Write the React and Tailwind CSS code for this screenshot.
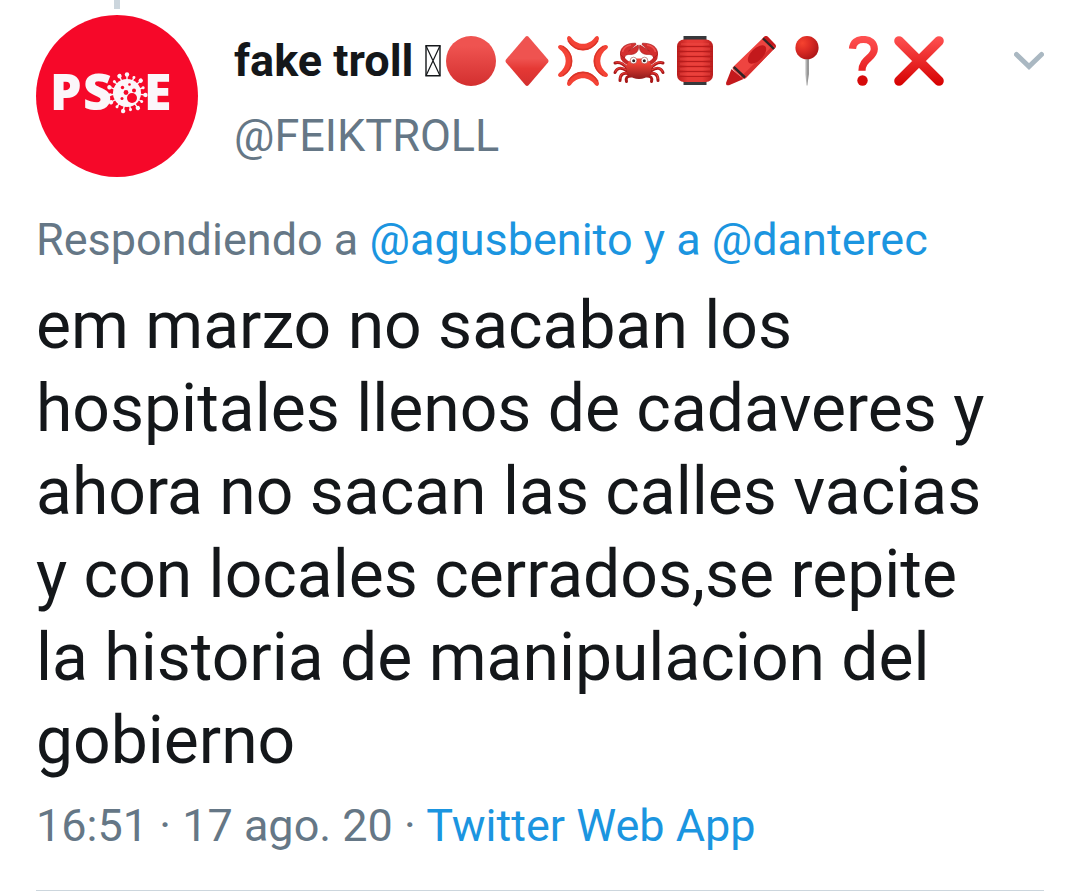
import { useId } from 'react';

const linkCls = 'text-[#1b95e0]';

const VIRUS_SPIKES = [0, 24, 48, 72, 96, 120, 144, 168, 192, 216, 240, 264, 288, 312, 336];

function Avatar() {
  return (
    <svg className="block w-full" viewBox="0 0 162 162" role="img" aria-label="PSOE">
      <circle cx="81" cy="81" r="81" fill="#f60829" />
      <g fill="#fbf6fa" fontFamily="'Open Sans', sans-serif" fontWeight="800" fontSize="50">
        <text x="14" y="95">P</text>
        <text x="47" y="95">S</text>
        <text x="108" y="95">E</text>
      </g>
      <g fill="#fbf6fa" stroke="#fbf6fa">
        <circle cx="91" cy="78" r="14" stroke="none" />
        {VIRUS_SPIKES.map((a, i) => (
          <g key={a} transform={`rotate(${a} 91 78)`}>
            <path d={i % 2 ? 'M91 66V61' : 'M91 66V60'} strokeWidth="1.4" />
            <circle cx="91" cy={i % 2 ? 61 : 59.5} r={i % 2 ? 1.5 : 2.2} stroke="none" />
          </g>
        ))}
      </g>
      <g fill="#f60829">
        <circle cx="96" cy="83" r="5" />
        <circle cx="90" cy="77.5" r="2.4" />
        <circle cx="98" cy="75.5" r="2" />
        <circle cx="86.5" cy="72.5" r="1.7" />
        <circle cx="93.5" cy="69.5" r="1.3" />
        <circle cx="86" cy="83.5" r="1.5" />
      </g>
    </svg>
  );
}

// every emoji sits on a 56x50 grid
function Emoji({ label, children }) {
  return (
    <svg className="h-[50px] w-14 shrink-0" viewBox="0 0 56 50" role="img" aria-label={label}>
      {children}
    </svg>
  );
}

function Shade({ id, from = '#ef5350', to = '#d32f2f' }) {
  return (
    <linearGradient id={id} x1="0" y1="0" x2="0" y2="1">
      <stop offset="0.2" stopColor={from} />
      <stop offset="1" stopColor={to} />
    </linearGradient>
  );
}

function MissingGlyph() {
  return (
    <svg className="h-8 w-4 shrink-0" viewBox="0 0 16 32" fill="none" stroke="#14171a" role="img" aria-label="missing glyph">
      <path d="M1 .7h14v30H1z" strokeWidth="1.4" />
      <path d="M1 .7l14 30M15 .7L1 30.7" strokeWidth="1.2" />
    </svg>
  );
}

function RedCircle() {
  const id = useId();
  return (
    <Emoji label="red circle">
      <Shade id={id} />
      <circle cx="28" cy="25" r="25" fill={`url(#${id})`} />
    </Emoji>
  );
}

function Diamond() {
  const id = useId();
  return (
    <Emoji label="red diamond">
      <linearGradient id={id} x1="0" y1="0" x2="0" y2="1">
        <stop offset="0" stopColor="#ef5350" />
        <stop offset="0.45" stopColor="#ef5350" />
        <stop offset="0.65" stopColor="#e53935" />
        <stop offset="1" stopColor="#d32f2f" />
      </linearGradient>
      <path d="M26.5.8Q28-.8 29.5.8L49 23.5Q50 25 49 26.5L29.5 49.2Q28 50.8 26.5 49.2L7 26.5Q6 25 7 23.5z" fill={`url(#${id})`} />
    </Emoji>
  );
}

function Anger() {
  return (
    <Emoji label="anger">
      {[0, 90, 180, 270].map((a) => (
        <g key={a} transform={`rotate(${a} 28 25)`}>
          <path d="M12.3 1.2Q13.5-1 15.8.9C22 10 34 10 40.2.9Q42.5-1 43.7 1.2Q44.5 3 43 5.2C35.5 17.5 20.5 17.5 13 5.2Q11.5 3 12.3 1.2z" fill="#f44336" />
          <path d="M13 4.6C20.5 16.5 35.5 16.5 43 4.6" fill="none" stroke="#d93428" strokeWidth="1.4" />
        </g>
      ))}
    </Emoji>
  );
}

function CrabSide() {
  return (
    <g>
      <path d="M17 33Q10 25 4 27M16 35Q7 29 4 36.5M17 37.5Q9 36 9 44.5M20 40Q14 40 15.5 45.5" fill="none" stroke="#a91818" strokeWidth="3" strokeLinecap="round" />
      <path d="M16 31.5Q10 25 5 26.5M15 33.8Q7.500 29 4.500 35.500M16 37Q9.500 36 9 42.500" fill="none" stroke="#e53935" strokeWidth="1.2" strokeLinecap="round" />
      <path d="M17.500 27.500Q9 23 11.800 16" fill="none" stroke="#c62828" strokeWidth="4.200" strokeLinecap="round" />
      <path d="M9.500 18.500C9 11.500 14.500 7.200 24.500 7.200L25 8.500L17.500 15L27.200 9C28.500 14.500 25.500 18.300 19.500 18.500C16.500 18.500 14.500 18.500 13.200 22z" fill="#d32f2f" stroke="#a91818" strokeWidth="0.7" />
      <path d="M11.500 16Q13 10 20 9" fill="none" stroke="#ef5350" strokeWidth="1.4" />
    </g>
  );
}

function Crab() {
  const id = useId();
  return (
    <Emoji label="crab">
      <Shade id={id} from="#f44336" to="#8f1c1c" />
      <CrabSide />
      <g transform="matrix(-1 0 0 1 56 0)"><CrabSide /></g>
      <path d="M15.500 31C16 25 21 22.500 28 22.500S40 25 40.500 31C41 37.500 36.500 43 28 43S15 37.500 15.500 31z" fill={`url(#${id})`} />
      <circle cx="22.5" cy="24.5" r="3.3" fill="#fff" stroke="#8f2a24" strokeWidth="0.5" />
      <circle cx="33.5" cy="24.5" r="3.3" fill="#fff" stroke="#8f2a24" strokeWidth="0.5" />
      <circle cx="22.7" cy="24.7" r="1.5" fill="#33201f" />
      <circle cx="33.3" cy="24.7" r="1.5" fill="#33201f" />
    </Emoji>
  );
}

function Lantern() {
  const id = useId();
  return (
    <Emoji label="red lantern">
      <linearGradient id={id}>
        <stop offset="0" stopColor="#b91c1c" />
        <stop offset="0.3" stopColor="#e53935" />
        <stop offset="0.7" stopColor="#e53935" />
        <stop offset="1" stopColor="#b91c1c" />
      </linearGradient>
      <path d="M16.500 0h23v6h-23zM16.500 44h23v5h-23z" fill="#37393c" />
      <rect x="10" y="3.500" width="36" height="42.500" rx="7" fill={`url(#${id})`} />
      <path d="M11 10.500h34M10 15.500h36M10 20.500h36M10 25.500h36M10 30.500h36M10 35.500h36M11 40.500h34" stroke="#b71c1c" strokeWidth="1" />
      <path d="M14 8h28M13 13h30M13 18h30M13 23h30M13 28h30M13 33h30M13 38h30" stroke="#f0524c" strokeWidth="0.7" />
    </Emoji>
  );
}

function Crayon() {
  return (
    <Emoji label="crayon">
      <path d="M3.200 46.500L8.500 33L20.500 43L6 49.200Q2.500 50 3.200 46.500z" fill="#c3191c" />
      <path d="M10 31L41 1Q43-.8 45 1L52.200 8.500Q53.500 10.500 51.800 12L23 42Q21 43.500 19 42L11 34.500Q8.800 32.500 10 31z" fill="#ee4440" />
      <path d="M41 1Q43-.8 45 1L52.200 8.500Q53.500 10.500 51.800 12L50 13L39.500 2.500z" fill="#c3191c" />
      <path d="M17 41.500L50.500 9L52.500 11.500L22 42.500z" fill="#d8302f" />
      <path d="M40 2.500L51 13M10.800 31L22 41.500" stroke="#2e2526" strokeWidth="2.400" />
      <ellipse cx="34" cy="18.500" rx="11.500" ry="6" transform="rotate(-45 34 18.500)" fill="#c3191c" />
    </Emoji>
  );
}

function Pin() {
  const id = useId();
  const metal = useId();
  return (
    <Emoji label="round pushpin">
      <radialGradient id={id} cx="0.3" cy="0.3" r="0.75">
        <stop offset="0" stopColor="#f6432f" />
        <stop offset="0.45" stopColor="#dd2c25" />
        <stop offset="1" stopColor="#b01718" />
      </radialGradient>
      <linearGradient id={metal}>
        <stop offset="0" stopColor="#d6d6d6" />
        <stop offset="1" stopColor="#757575" />
      </linearGradient>
      <path d="M26.200 20h3.600v18L28.400 49.500h-.8L26.200 38z" fill={`url(#${metal})`} />
      <circle cx="28" cy="11.700" r="11.600" fill={`url(#${id})`} />
    </Emoji>
  );
}

function Question() {
  const id = useId();
  return (
    <Emoji label="question mark">
      <linearGradient id={id} gradientUnits="userSpaceOnUse" x1="0" y1="0" x2="0" y2="50">
        <stop offset="0" stopColor="#ff5252" />
        <stop offset="0.5" stopColor="#ee2f30" />
        <stop offset="1" stopColor="#dd0a0a" />
      </linearGradient>
      <path d="M17.500 12.800C18 6.500 22 3.500 28.300 3.500C35 3.500 39.300 7 39.300 13C39.300 22 27 22.500 27 34.800" fill="none" stroke={`url(#${id})`} strokeWidth="7.200" />
      <circle cx="27.500" cy="44.500" r="5.200" fill="#d60a0a" />
    </Emoji>
  );
}

function Cross() {
  const id = useId();
  return (
    <Emoji label="cross mark">
      <linearGradient id={id} gradientUnits="userSpaceOnUse" x1="0" y1="0" x2="0" y2="50">
        <stop offset="0" stopColor="#ff5252" />
        <stop offset="1" stopColor="#d50000" />
      </linearGradient>
      <path d="M8 5L48 45M48 5L8 45" stroke={`url(#${id})`} strokeWidth="9.600" strokeLinecap="round" />
    </Emoji>
  );
}

export default function App() {
  return (
    <main className="bg-white px-9 font-['Roboto',sans-serif] text-[#14171a]">
      <article className="border-b border-[#ccd6dd] pb-[34px]">
        <header className="flex gap-9">
          <div className="w-[162px] shrink-0">
            <div className="mx-auto mb-1.5 h-[9px] w-1.5 bg-[#ccd6dd]" />
            <Avatar />
          </div>
          <div className="min-w-0 flex-1 pt-[31px]">
            <div className="flex items-center">
              <h1 className="mr-[11px] text-[45px] leading-[60px] font-bold whitespace-nowrap">fake troll</h1>
              <MissingGlyph />
              <div className="ml-0.5 flex">
                <RedCircle />
                <Diamond />
                <Anger />
                <Crab />
                <Lantern />
                <Crayon />
                <Pin />
                <Question />
                <Cross />
              </div>
              <button type="button" aria-label="More options" className="ml-auto">
                <svg className="h-5 w-[30px]" viewBox="0 0 30 20" fill="none" stroke="#aab8c2" strokeWidth="5" strokeLinecap="round">
                  <path d="M2.500 3.500L15 15.500L27.500 3.500" />
                </svg>
              </button>
            </div>
            <p className="mt-[15px] text-[45px] leading-[60px] text-[#657786]">@FEIKTROLL</p>
          </div>
        </header>

        <p className="mt-[33px] text-[45px] leading-[60px] text-[#657786]">
          Respondiendo a{' '}
          <a href="#replies" className={linkCls}>@agusbenito y a @danterec</a>
        </p>

        <p className="mt-3.5 pr-12 text-[66px] leading-[83px]">
          em marzo no sacaban los hospitales llenos de cadaveres y ahora no sacan las calles vacias y con
          locales cerrados,se repite la historia de manipulacion del gobierno
        </p>

        <p className="mt-3.5 text-[45px] leading-[60px] text-[#657786]">
          <time dateTime="2020-08-17T16:51">16:51 · 17 ago. 20</time> ·{' '}
          <a href="#source" className={linkCls}>Twitter Web App</a>
        </p>
      </article>
    </main>
  );
}
